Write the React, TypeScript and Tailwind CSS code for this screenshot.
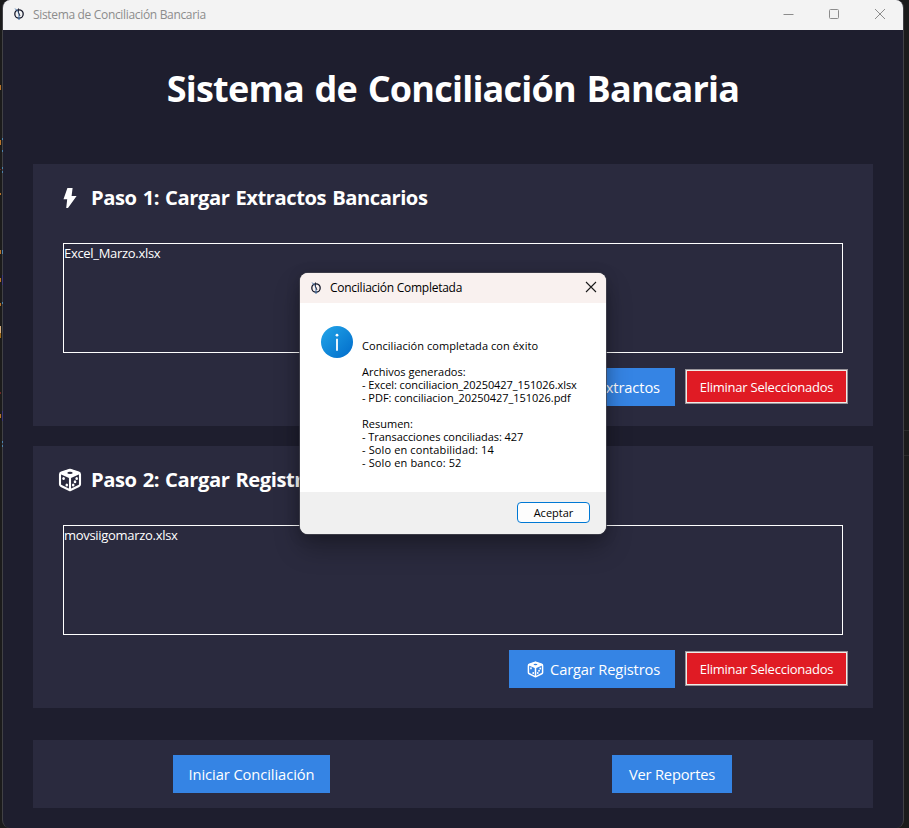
import type { ReactNode } from 'react';

function Dice({ className, pip }: { className: string; pip: string }) {
  return (
    <svg viewBox="0 0 24 24" className={className} fill="none" stroke="currentColor" strokeWidth="2.1" strokeLinejoin="round">
      <path d="M12 1.8 20.6 4.6Q22 5.1 22 6.6v9.6q0 1.2-1.2 1.8L12 22.3 3.2 18Q2 17.400 2 16.200V6.600Q2 5.100 3.400 4.600z" />
      <path d="M12 9v13" />
      <path d="M12 2 21 5.400 12 9.200 3 5.400z" fill="currentColor" />
      <ellipse cx="12" cy="4.900" rx="2.700" ry="1.100" fill={pip} stroke="none" />
      <g fill="currentColor" stroke="none">
        <ellipse cx="5.600" cy="10.400" rx="1.300" ry="1.500" />
        <ellipse cx="8.800" cy="17" rx="1.300" ry="1.500" />
        <ellipse cx="18.700" cy="10.600" rx="1.300" ry="1.500" />
        <ellipse cx="17" cy="13.700" rx="1.300" ry="1.500" />
        <ellipse cx="15.200" cy="17" rx="1.300" ry="1.500" />
      </g>
    </svg>
  );
}

function Bolt() {
  return (
    <svg viewBox="0 0 14 20" className="h-5 w-3.5" fill="currentColor">
      <path d="M9.600 0 4.400 0 .5 11.200h3.700L3.200 20h1.800L13.600 8H8.600z" />
    </svg>
  );
}

function AppIcon() {
  return (
    <svg viewBox="0 0 12 12" className="h-3 w-3 shrink-0" fill="none">
      <circle cx="6" cy="6" r="4.2" stroke="#15182a" strokeWidth="1.3" />
      <path d="M2.2.6 4.800 3.400 6 6v6" stroke="#3b6ea8" strokeWidth="1" />
      <path d="M5.500.4v4L7 8" stroke="#15182a" strokeWidth=".8" />
    </svg>
  );
}

const blueButton = 'flex h-[38px] items-center bg-[#3584e4] text-[14.7px] whitespace-nowrap text-white';

function Step({ icon, title, file, action }: { icon: ReactNode; title: string; file: string; action: ReactNode }) {
  return (
    <section className="h-[262px] bg-[#2a2a3e] px-[30px] pt-[19px]">
      <div className="-ml-[5px] flex h-[30px] items-center gap-[9px]">
        <span className="flex w-6 justify-center">{icon}</span>
        <h2 className="pb-0.5 text-[20.2px] font-bold tracking-[-0.46px] whitespace-nowrap [word-spacing:1.3px]">{title}</h2>
      </div>
      <div className="mt-[30px] h-[110px] border border-white text-[13px] leading-[18px] tracking-[-0.3px]">{file}</div>
      <div className="-mr-[5px] mt-[15px] flex items-start justify-end gap-[10px]">
        {action}
        <button className="mt-px h-[35px] w-[163px] border border-[#98949a] bg-[#f0ece6] p-px">
          <span className="flex h-full items-center justify-center bg-[#e01b24] pt-0.5 text-[13px] tracking-[-0.23px]">Eliminar Seleccionados</span>
        </button>
      </div>
    </section>
  );
}

function Dialog() {
  return (
    <div role="dialog" className="absolute top-[273px] left-[300px] flex h-[261px] w-[306px] flex-col overflow-hidden rounded-lg bg-white text-black shadow-[0_0_0_1px_rgba(70,70,80,0.75),0_14px_26px_rgba(0,0,0,0.28),0_2px_14px_rgba(0,0,0,0.2)]">
      <header className="flex h-[30px] shrink-0 items-center bg-[#f9f1ef] pr-[9px] pl-[10px]">
        <AppIcon />
        <span className="ml-2 text-[12px] tracking-[-0.26px]">Conciliación Completada</span>
        <svg viewBox="0 0 12 12" className="mb-0.5 ml-auto h-3 w-3" stroke="#1b1b1b" strokeWidth="1.1">
          <path d="m1 1 10 10M11 1 1 11" />
        </svg>
      </header>
      <div className="flex flex-1 pl-[21px]">
        <svg viewBox="0 0 32 32" className="mt-[23px] h-8 w-8 shrink-0">
          <defs>
            <linearGradient id="info" x1="0" y1="0" x2="1" y2="1">
              <stop offset=".1" stopColor="#1fa0e6" />
              <stop offset=".9" stopColor="#0471cd" />
            </linearGradient>
          </defs>
          <circle cx="16" cy="16" r="16" fill="url(#info)" />
          <circle cx="16" cy="9.2" r="1.4" fill="#fff" />
          <path d="M16 12.8v12" stroke="#fff" strokeWidth="1.8" />
        </svg>
        <div className="ml-[9px] pt-[36px] text-[11px] leading-[13px] whitespace-nowrap">
          <p className="tracking-[0.05px]">Conciliación completada con éxito</p>
          <p className="mt-[13px]">Archivos generados:</p>
          <p className="tracking-[-0.08px]">- Excel: conciliacion_20250427_151026.xlsx</p>
          <p className="tracking-[-0.03px]">- PDF: conciliacion_20250427_151026.pdf</p>
          <p className="mt-[13px]">Resumen:</p>
          <p className="tracking-[-0.06px]">- Transacciones conciliadas: 427</p>
          <p className="tracking-[0.12px]">- Solo en contabilidad: 14</p>
          <p className="tracking-[0.14px]">- Solo en banco: 52</p>
        </div>
      </div>
      <footer className="flex h-[42px] shrink-0 justify-end bg-[#f0f0f0] pt-[10px] pr-4">
        <button className="flex h-[21px] w-[73px] items-center justify-center rounded-[4px] border border-[#0078d4] bg-[#fdfdfd] pt-0.5 text-[11px]">Aceptar</button>
      </footer>
    </div>
  );
}

/* Slivers of the editor window that lies behind, at its left edge. */
function EditorEdge() {
  return (
    <svg className="absolute top-0 left-0 h-[828px] w-[3px]" viewBox="0 0 3 828" shapeRendering="crispEdges">
      <g fill="#b8732a">
        <path d="M0 85h1v5H0zM0 140h1v5H0zM0 193h1v2H0zM0 250h1v4H0zM0 278h1v4H0zM0 303h1v3H0zM0 414h1v4H0z" />
      </g>
      <path d="M0 326h1v7H0z" fill="#d8b080" />
      <path d="M0 333h1v5H0z" fill="#a06a18" />
      <path d="M0 169h1v1H0zM0 392h1v2H0z" fill="#6e2626" />
      <path d="M2 138h1v2H2zM2 150h1v2H2zM2 167h1v2H2zM2 171h1v2H2zM2 250h1v4H2zM2 302h1v2H2zM2 441h1v2H2zM2 445h1v2H2z" fill="#4d83ad" />
      <path d="M2 275h1v10H2zM2 411h1v10H2z" fill="#3d3878" />
    </svg>
  );
}

export default function App() {
  return (
    <div className="relative h-[828px] w-[909px] overflow-hidden bg-[#1b1b1b] pl-[2px] font-['Open_Sans','Noto_Sans',sans-serif] text-white">
      <div className="h-[828px] w-[902px] overflow-hidden rounded-lg border-x border-[#414145] bg-[#1e1e2e]">
        <header className="flex h-[30px] items-center bg-[#f3f3f3] pr-[17px] pb-0.5 pl-[10px] text-[12px] text-[#8c8c8c]">
          <AppIcon />
          <span className="mt-0.5 ml-2 tracking-[-0.33px]">Sistema de Conciliación Bancaria</span>
          <div className="ml-auto flex gap-[34px]">
            <svg viewBox="0 0 12 12" className="h-3 w-3" stroke="currentColor" fill="none"><path d="M1.500 6.500h10" /></svg>
            <svg viewBox="0 0 12 12" className="h-3 w-3" stroke="currentColor" fill="none"><rect x="1.500" y="1.500" width="9" height="9" rx="1" /></svg>
            <svg viewBox="0 0 12 12" className="h-3 w-3" stroke="currentColor" fill="none"><path d="m1 1 10 10M11 1 1 11" /></svg>
          </div>
        </header>
        <main className="px-[30px]">
          <h1 className="h-[134px] pt-[34px] text-center text-[36px] leading-[50px] font-bold tracking-[-0.77px] whitespace-nowrap [word-spacing:2px]">Sistema de Conciliación Bancaria</h1>
          <Step
            icon={<Bolt />}
            title="Paso 1: Cargar Extractos Bancarios"
            file="Excel_Marzo.xlsx"
            action={<button className={`${blueButton} w-[170px] justify-end pr-[15px] tracking-[-0.12px]`}>Cargar Extractos</button>}
          />
          <div className="h-5" />
          <Step
            icon={<Dice className="h-6 w-6" pip="#2a2a3e" />}
            title="Paso 2: Cargar Registros Contables"
            file="movsiigomarzo.xlsx"
            action={
              <button className={`${blueButton} w-[166px] justify-end gap-1.5 pr-[15px] tracking-[-0.16px]`}>
                <Dice className="h-[17px] w-[17px]" pip="#3584e4" />
                Cargar Registros
              </button>
            }
          />
          <footer className="mt-8 flex h-[68px] items-center justify-between bg-[#2a2a3e] pr-[141px] pl-[140px]">
            <button className={`${blueButton} w-[157px] justify-center tracking-[-0.08px]`}>Iniciar Conciliación</button>
            <button className={`${blueButton} w-[120px] justify-center tracking-[-0.2px]`}>Ver Reportes</button>
          </footer>
        </main>
      </div>
      <EditorEdge />
      <div className="absolute top-[430px] right-0 h-px w-[5px] bg-[#2b2b2b]" />
      <div className="absolute top-[455px] right-0 h-px w-[5px] bg-[#2b2b2b]" />
      <Dialog />
    </div>
  );
}
